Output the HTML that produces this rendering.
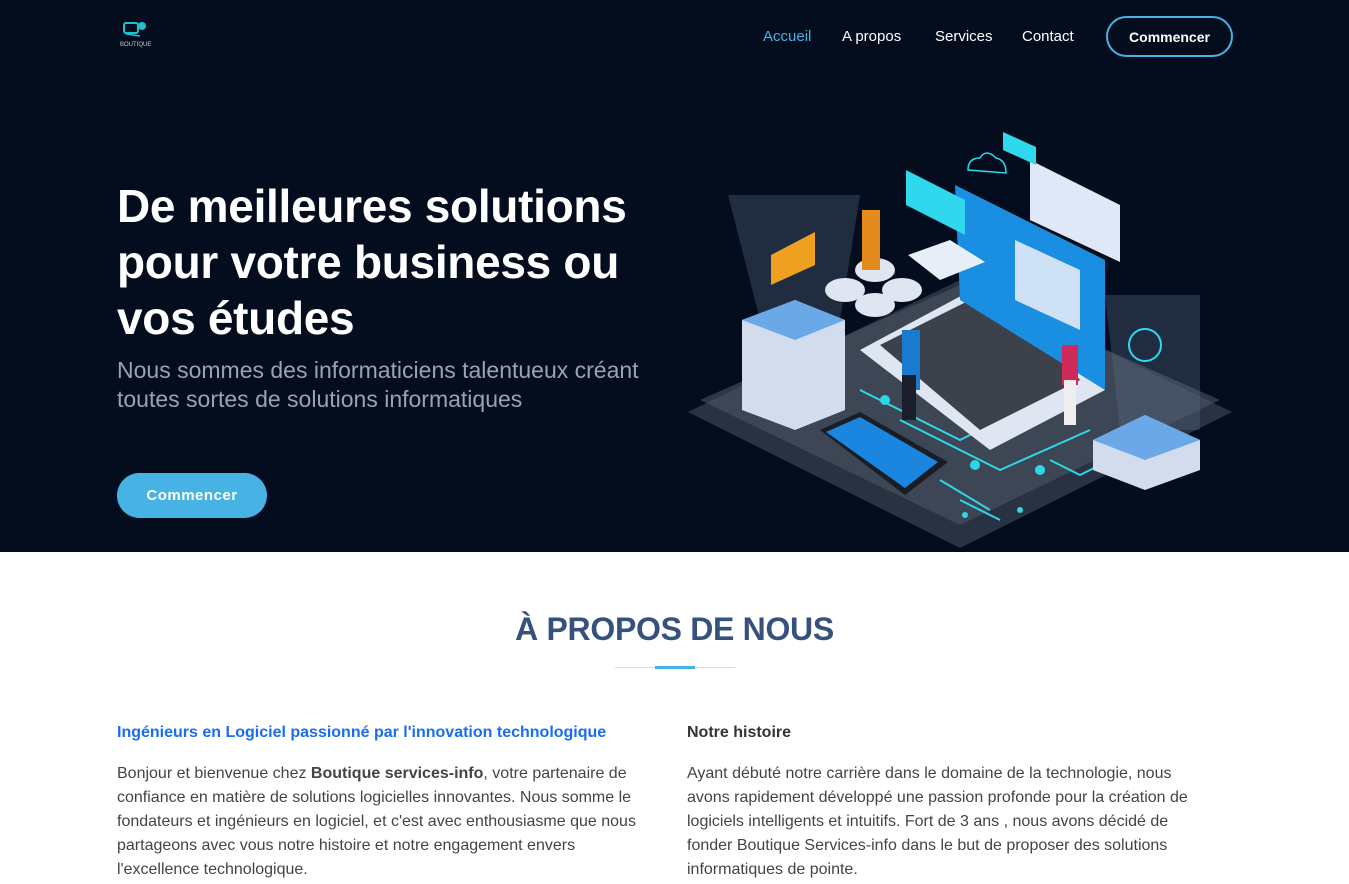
<!DOCTYPE html>
<html><head><meta charset="utf-8">
<style>
*{margin:0;padding:0;box-sizing:border-box}
body{width:1349px;height:884px;overflow:hidden;font-family:"Liberation Sans",sans-serif;background:#fff}
.hero{position:relative;height:552px;background:#030d1d}
.nav{position:absolute;top:0;left:0;right:0;height:73px}
.nav a{position:absolute;top:28px;color:#fff;font-size:15px;text-decoration:none}
.btn1{position:absolute;left:1106px;top:16px;width:127px;height:41px;border:2px solid #47b2e4;border-radius:22px;color:#fff;font-weight:bold;font-size:14px;text-align:center;line-height:38px}
h1{position:absolute;left:117px;top:178px;color:#fff;font-size:46px;line-height:56px;font-weight:bold;width:560px;letter-spacing:-0.3px}
.sub{position:absolute;left:117px;top:356px;color:#9aa3b2;font-size:23px;line-height:29px;width:560px}
.btn2{position:absolute;left:117px;top:473px;width:150px;height:45px;border-radius:23px;background:#47b2e4;color:#fff;font-weight:bold;font-size:15px;text-align:center;line-height:45px;letter-spacing:0.5px}
.title{position:absolute;top:611px;left:0;width:1349px;text-align:center;color:#37517e;font-size:32px;font-weight:bold;letter-spacing:-0.3px}
.line{position:absolute;left:615px;top:667px;width:120px;height:1px;background:#ddd}
.line2{position:absolute;left:655px;top:666px;width:40px;height:3px;background:#47b2e4}
.col{position:absolute;top:721px;width:540px;font-size:16px;line-height:24px;color:#444}
.col h3{font-size:16px;font-weight:bold;margin-bottom:18px;line-height:22px;margin-top:1px}
</style></head><body>
<div class="hero">
<div class="nav">
<svg style="position:absolute;left:118px;top:20px" width="38" height="30" viewBox="0 0 38 30"><rect x="6" y="3" width="14" height="10" rx="2" fill="none" stroke="#1fc0d0" stroke-width="2"/><circle cx="24" cy="6" r="4" fill="#1fc0d0"/><path d="M8 14 L22 16" stroke="#1fc0d0" stroke-width="1.5"/><text x="2" y="26" font-size="6" fill="#ccc" font-family="Liberation Sans">BOUTIQUE</text></svg>
<a style="left:763px;color:#47b2e4">Accueil</a>
<a style="left:842px">A propos</a>
<a style="left:935px">Services</a>
<a style="left:1022px">Contact</a>
<div class="btn1">Commencer</div>
</div>
<h1>De meilleures solutions pour votre business ou vos études</h1>
<div class="sub">Nous sommes des informaticiens talentueux créant toutes sortes de solutions informatiques</div>
<div class="btn2">Commencer</div>
<svg style="position:absolute;left:680px;top:120px" width="560" height="432" viewBox="680 120 560 432">
<polygon points="688,412 960,280 1232,412 960,548" fill="#3a4352" opacity="0.7"/>
<polygon points="700,400 960,285 1220,400 960,525" fill="#4a5463" opacity="0.6"/>
<polygon points="728,195 860,195 840,320 760,320" fill="#5a6a85" opacity="0.35"/>
<polygon points="1105,295 1200,295 1200,430 1120,430" fill="#5a6a85" opacity="0.35"/>
<g stroke="#2fd6e6" stroke-width="2" fill="none"><path d="M860,390 L960,440 L1040,400 M900,420 L1000,470 L1090,430 M940,480 L990,510 M960,500 L1000,520 M1050,460 L1080,475 L1130,450"/></g>
<g fill="#2fd6e6"><circle cx="885" cy="400" r="5"/><circle cx="975" cy="465" r="5"/><circle cx="1040" cy="470" r="5"/><circle cx="965" cy="515" r="3"/><circle cx="1020" cy="510" r="3"/></g>
<polygon points="860,350 1000,275 1105,390 990,450" fill="#dfe6f1"/>
<polygon points="880,345 1000,285 1080,380 980,430" fill="#3c414b"/>
<polygon points="955,185 1105,260 1105,390 960,300" fill="#1a8ee0"/>
<polygon points="1015,240 1080,270 1080,330 1015,300" fill="#cfe1f5"/>
<polygon points="742,320 795,300 845,320 845,410 795,430 742,410" fill="#d2dcec"/>
<polygon points="742,320 795,300 845,320 795,340" fill="#6aa8e8"/>
<polygon points="1093,440 1145,415 1200,440 1200,470 1145,490 1093,470" fill="#d2dcec"/>
<polygon points="1093,440 1145,415 1200,440 1145,460" fill="#6aa8e8"/>
<polygon points="820,430 860,412 948,462 905,495" fill="#1a1d24"/>
<polygon points="826,432 860,417 938,462 905,488" fill="#1a86e0"/>
<ellipse cx="845" cy="290" rx="20" ry="12" fill="#dfe6f1"/><ellipse cx="875" cy="270" rx="20" ry="12" fill="#dfe6f1"/><ellipse cx="902" cy="290" rx="20" ry="12" fill="#dfe6f1"/><ellipse cx="875" cy="305" rx="20" ry="12" fill="#dfe6f1"/>
<rect x="862" y="210" width="18" height="60" fill="#e58a1f"/>
<rect x="902" y="330" width="18" height="60" fill="#1a7ad0"/><rect x="902" y="375" width="14" height="45" fill="#1a1d2a"/>
<rect x="1062" y="345" width="16" height="40" fill="#d02a5a"/><rect x="1064" y="380" width="12" height="45" fill="#eee"/>
<polygon points="771,255 815,232 815,265 771,285" fill="#f0a020"/>
<polygon points="906,170 965,200 965,235 906,205" fill="#30d8ee"/>
<polygon points="1030,160 1120,205 1120,262 1030,220" fill="#dfe8f6"/>
<polygon points="1003,132 1036,147 1036,165 1003,150" fill="#30d8ee"/>
<polygon points="908,255 950,240 985,262 940,280" fill="#e8eef7"/>
<path d="M968,170 q0,-12 12,-12 q6,-10 16,0 q10,2 10,15 z" fill="none" stroke="#30d8ee" stroke-width="1.5"/>
<circle cx="1145" cy="345" r="16" fill="none" stroke="#30d8ee" stroke-width="2"/>
</svg>
</div>
<div class="title">À PROPOS DE NOUS</div>
<div class="line"></div><div class="line2"></div>
<div class="col" style="left:117px;width:540px"><h3 style="color:#1c6cf0">Ingénieurs en Logiciel passionné par l'innovation technologique</h3>Bonjour et bienvenue chez <b>Boutique services-info</b>, votre partenaire de confiance en matière de solutions logicielles innovantes. Nous somme le fondateurs et ingénieurs en logiciel, et c'est avec enthousiasme que nous partageons avec vous notre histoire et notre engagement envers l'excellence technologique.</div>
<div class="col" style="left:687px;width:515px"><h3 style="color:#333">Notre histoire</h3>Ayant débuté notre carrière dans le domaine de la technologie, nous avons rapidement développé une passion profonde pour la création de logiciels intelligents et intuitifs. Fort de 3 ans , nous avons décidé de fonder Boutique Services-info dans le but de proposer des solutions informatiques de pointe.</div>
</body></html>
